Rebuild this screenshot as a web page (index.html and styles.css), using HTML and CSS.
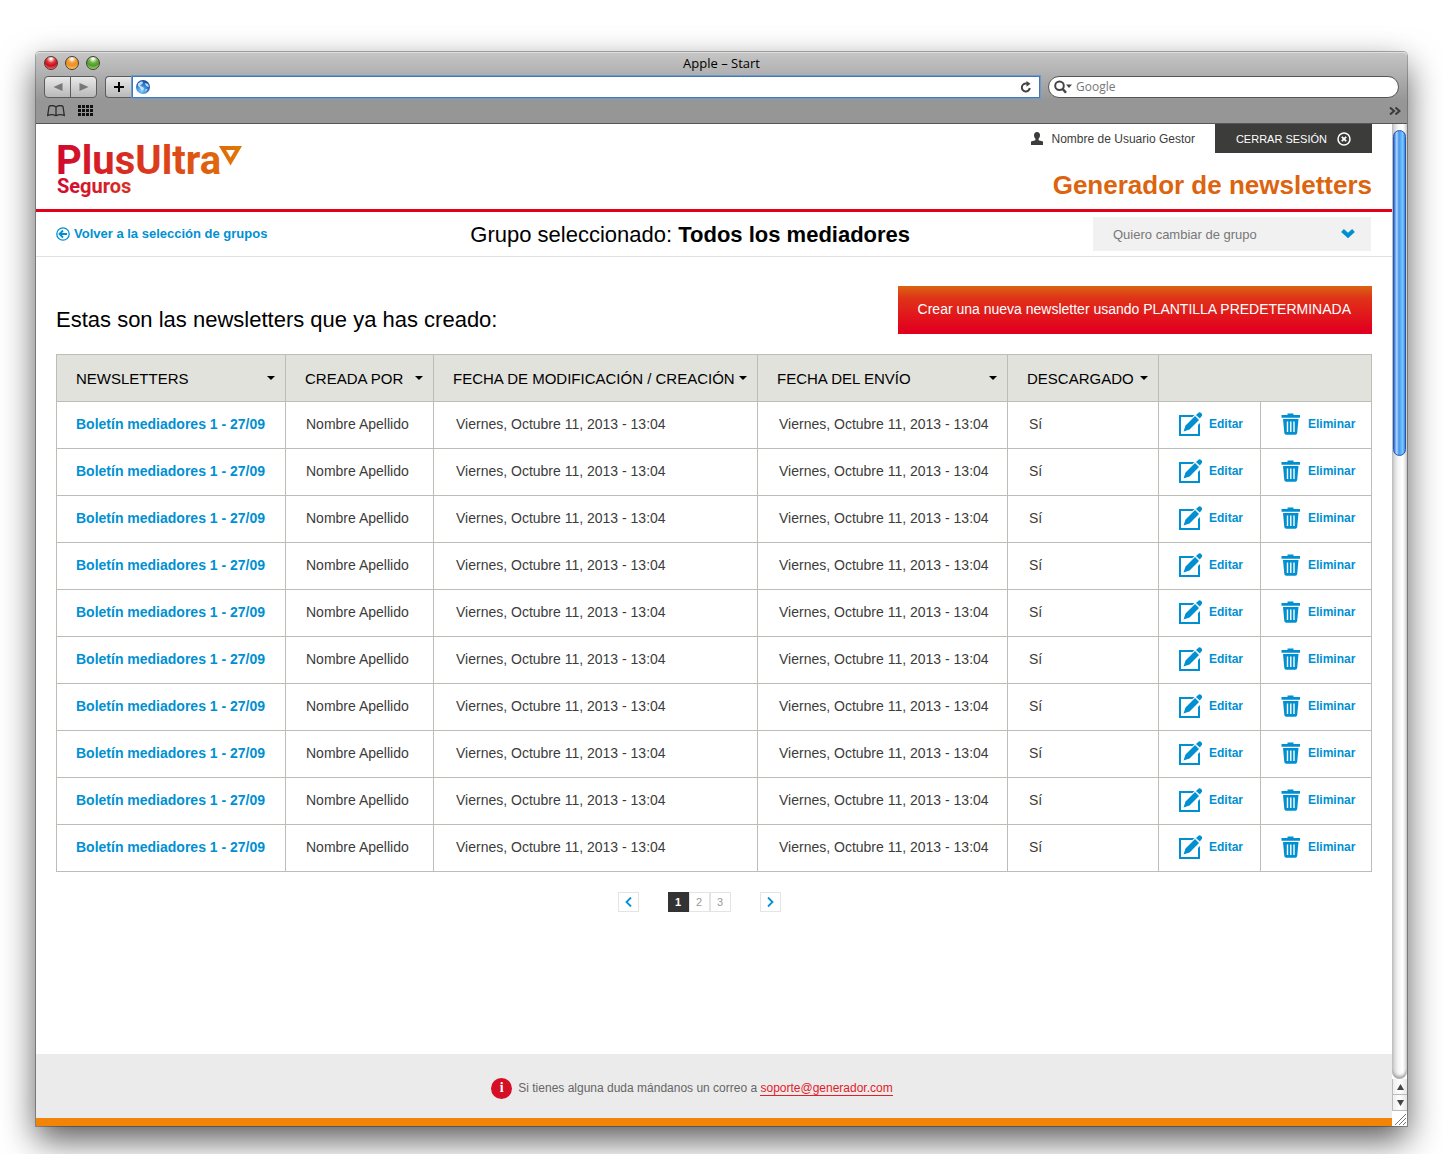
FILE: index.html
```html
<!DOCTYPE html>
<html lang="es">
<head>
<meta charset="utf-8">
<title>Generador de newsletters</title>
<link rel="stylesheet" href="styles.css">
</head>
<body>
<svg class="sprites" aria-hidden="true">
  <symbol id="edit" viewBox="0 0 24 24">
    <path d="M15.500 3H0v21h21V11l-2 2v9H2V5h11.500z"/>
    <path d="M4.500 19.500l2-6L16 4l4 4-9.500 9.500zM17 3l2.200-2.100q1.400-1.200 3 .2 1.600 1.800.4 3.100L20.800 6.500z"/>
  </symbol>
  <symbol id="trash" viewBox="0 0 20 22">
    <path d="M6.500 2V.5h6V2H19v2.800H.5V2zM2 6h15.500l-1.300 14q-.2 1.800-2 1.800H5.300q-1.800 0-2-1.800z"/>
    <path d="M6.500 8.500v10.500M9.800 8.500v10.500M13 8.500v10.500" stroke="#fff" stroke-width="1.400"/>
  </symbol>
</svg>
<div class="window">
  <div class="chrome">
    <div class="titlebar">
      <div class="lights"><span class="light red"></span><span class="light amber"></span><span class="light green"></span></div>
      <div class="window-title">Apple – Start</div>
    </div>
    <div class="toolbar">
      <div class="nav-buttons">
        <button type="button" aria-label="Atrás"><svg width="10" height="8"><path d="M9.500 0v8L.5 4z" fill="#777"/></svg></button>
        <button type="button" aria-label="Adelante"><svg width="10" height="8"><path d="M.5 0v8l9-4z" fill="#777"/></svg></button>
      </div>
      <div class="location">
        <button class="add" type="button" aria-label="Añadir"><svg width="12" height="12"><path d="M6 1v10M1 6h10" stroke="#000" stroke-width="2"/></svg></button>
        <div class="address">
          <svg width="14" height="14" viewBox="0 0 14 14"><defs><radialGradient id="globe" cx=".4" cy=".75" r=".8"><stop offset="0" stop-color="#8ad4fb"/><stop offset=".55" stop-color="#2d77cd"/><stop offset="1" stop-color="#123f91"/></radialGradient></defs><circle cx="7" cy="7" r="7" fill="url(#globe)"/><path d="M2 3.500l3-2 2 .3-.5 2L4 5.500l1.500 1L8 8 7 10.500 5 9.500 4 7.500 2 6zM9 3l3 1 1 3-2-.5L9.500 5zM9.500 9l2 .3-2 2.700z" fill="#d8f0ff" opacity=".85"/></svg>
          <input type="text" aria-label="Dirección">
          <svg width="12" height="12" viewBox="0 0 12 12"><path d="M9.800 7A4 4 0 1 1 6.500 2.500H8" fill="none" stroke="#444" stroke-width="2"/><path d="M6.500 0l4 2.800-4 3z" fill="#444"/></svg>
        </div>
      </div>
      <div class="search">
        <svg width="19" height="14" viewBox="0 0 19 14"><circle cx="5.500" cy="5.800" r="4.300" fill="none" stroke="#444" stroke-width="2"/><path d="M8.500 8.800l3.500 4" stroke="#444" stroke-width="2.500"/><path d="M12 4.500h6L15 8z" fill="#444"/></svg>
        <input type="text" placeholder="Google" aria-label="Buscar">
      </div>
    </div>
    <div class="bookmarks">
      <svg width="18" height="12" viewBox="0 0 18 12"><path d="M9 2Q5-.7 2 1.500L.7 10.500Q5 8.500 9 10.800 13 8.500 17.300 10.500L16 1.500Q13-.7 9 2zV11" fill="none" stroke="#2b2b2b" stroke-width="1.300"/></svg>
      <svg width="15" height="12" viewBox="0 0 15 12"><path d="M0 1.500h15M0 5.500h15M0 9.500h15" stroke="#111" stroke-width="3" stroke-dasharray="3 1"/></svg>
      <svg class="more" width="12" height="8" viewBox="0 0 12 8"><path d="M1 .5L5 4 1 7.500M6.500 .5l4 3.500-4 3.500" fill="none" stroke="#3a3a3a" stroke-width="2"/></svg>
    </div>
  </div>
  <div class="viewport">
    <div class="page">
      <header class="header">
        <a class="logo" href="#" aria-label="PlusUltra Seguros">
          <svg width="188" height="60" viewBox="0 0 188 60">
            <defs><linearGradient id="brand" gradientUnits="userSpaceOnUse" x1="0" y1="0" x2="186" y2="0"><stop offset="0" stop-color="#cf0a2c"/><stop offset=".55" stop-color="#dc3f1a"/><stop offset="1" stop-color="#e07a05"/></linearGradient></defs>
            <g fill="url(#brand)"><text class="logo-name" x="-1" y="33">PlusUltra</text><text class="logo-sub" x="0" y="52">Seguros</text></g>
            <path d="M165.500 7h16L173.500 20.500z" fill="none" stroke="url(#brand)" stroke-width="4"/>
          </svg>
        </a>
        <div class="header-side">
          <div class="account">
            <svg width="12" height="13" viewBox="0 0 12 13"><path d="M6 0c2 0 3 1.400 3 3.300 0 1.500-.6 2.700-1.400 3.500v1.400L12 9.500V13H0V9.500l4.400-1.300V6.800C3.600 6 3 4.800 3 3.300 3 1.400 4 0 6 0z" fill="#3c3c3b"/></svg>
            <span class="user">Nombre de Usuario Gestor</span>
            <button class="logout" type="button">CERRAR SESIÓN <svg width="14" height="14" viewBox="0 0 14 14"><circle cx="7" cy="7" r="6" fill="none" stroke="#fff" stroke-width="1.500"/><path d="M4.800 4.800l4.400 4.400M9.200 4.800L4.800 9.200" stroke="#fff" stroke-width="1.800"/></svg></button>
          </div>
          <h1>Generador de newsletters</h1>
        </div>
      </header>
      <div class="groupbar">
        <a class="back" href="#"><svg width="14" height="14" viewBox="0 0 14 14"><circle cx="7" cy="7" r="6.200" fill="none" stroke="#0090d2" stroke-width="1.300"/><path d="M11 7H4M7 3.500L3.500 7 7 10.500" fill="none" stroke="#0090d2" stroke-width="1.800"/></svg>Volver a la selección de grupos</a>
        <p class="group">Grupo seleccionado: <strong>Todos los mediadores</strong></p>
        <div class="group-select">
          <select aria-label="Cambiar de grupo"><option>Quiero cambiar de grupo</option></select>
          <svg width="14" height="10" viewBox="0 0 14 10"><path d="M1.500 1.500L7 6.500l5.500-5" fill="none" stroke="#0090d2" stroke-width="4"/></svg>
        </div>
      </div>
      <main class="main">
        <div class="intro">
          <h2>Estas son las newsletters que ya has creado:</h2>
          <button class="create" type="button">Crear una nueva newsletter usando PLANTILLA PREDETERMINADA</button>
        </div>
        <table>
          <colgroup><col class="c-name"><col class="c-author"><col class="c-modified"><col class="c-sent"><col class="c-down"><col class="c-edit"><col class="c-delete"></colgroup>
          <thead><tr>
            <th><button type="button">NEWSLETTERS<i></i></button></th>
            <th><button type="button">CREADA POR<i></i></button></th>
            <th><button type="button">FECHA DE MODIFICACIÓN / CREACIÓN<i></i></button></th>
            <th><button type="button">FECHA DEL ENVÍO<i></i></button></th>
            <th><button type="button">DESCARGADO<i></i></button></th>
            <th colspan="2"></th>
          </tr></thead>
          <tbody>
            <tr><td><a href="#">Boletín mediadores 1 - 27/09</a></td><td>Nombre Apellido</td><td>Viernes, Octubre 11, 2013 - 13:04</td><td>Viernes, Octubre 11, 2013 - 13:04</td><td>Sí</td><td><a class="action" href="#"><svg width="24" height="24"><use href="#edit"/></svg>Editar</a></td><td><a class="action" href="#"><svg width="20" height="22"><use href="#trash"/></svg>Eliminar</a></td></tr>
            <tr><td><a href="#">Boletín mediadores 1 - 27/09</a></td><td>Nombre Apellido</td><td>Viernes, Octubre 11, 2013 - 13:04</td><td>Viernes, Octubre 11, 2013 - 13:04</td><td>Sí</td><td><a class="action" href="#"><svg width="24" height="24"><use href="#edit"/></svg>Editar</a></td><td><a class="action" href="#"><svg width="20" height="22"><use href="#trash"/></svg>Eliminar</a></td></tr>
            <tr><td><a href="#">Boletín mediadores 1 - 27/09</a></td><td>Nombre Apellido</td><td>Viernes, Octubre 11, 2013 - 13:04</td><td>Viernes, Octubre 11, 2013 - 13:04</td><td>Sí</td><td><a class="action" href="#"><svg width="24" height="24"><use href="#edit"/></svg>Editar</a></td><td><a class="action" href="#"><svg width="20" height="22"><use href="#trash"/></svg>Eliminar</a></td></tr>
            <tr><td><a href="#">Boletín mediadores 1 - 27/09</a></td><td>Nombre Apellido</td><td>Viernes, Octubre 11, 2013 - 13:04</td><td>Viernes, Octubre 11, 2013 - 13:04</td><td>Sí</td><td><a class="action" href="#"><svg width="24" height="24"><use href="#edit"/></svg>Editar</a></td><td><a class="action" href="#"><svg width="20" height="22"><use href="#trash"/></svg>Eliminar</a></td></tr>
            <tr><td><a href="#">Boletín mediadores 1 - 27/09</a></td><td>Nombre Apellido</td><td>Viernes, Octubre 11, 2013 - 13:04</td><td>Viernes, Octubre 11, 2013 - 13:04</td><td>Sí</td><td><a class="action" href="#"><svg width="24" height="24"><use href="#edit"/></svg>Editar</a></td><td><a class="action" href="#"><svg width="20" height="22"><use href="#trash"/></svg>Eliminar</a></td></tr>
            <tr><td><a href="#">Boletín mediadores 1 - 27/09</a></td><td>Nombre Apellido</td><td>Viernes, Octubre 11, 2013 - 13:04</td><td>Viernes, Octubre 11, 2013 - 13:04</td><td>Sí</td><td><a class="action" href="#"><svg width="24" height="24"><use href="#edit"/></svg>Editar</a></td><td><a class="action" href="#"><svg width="20" height="22"><use href="#trash"/></svg>Eliminar</a></td></tr>
            <tr><td><a href="#">Boletín mediadores 1 - 27/09</a></td><td>Nombre Apellido</td><td>Viernes, Octubre 11, 2013 - 13:04</td><td>Viernes, Octubre 11, 2013 - 13:04</td><td>Sí</td><td><a class="action" href="#"><svg width="24" height="24"><use href="#edit"/></svg>Editar</a></td><td><a class="action" href="#"><svg width="20" height="22"><use href="#trash"/></svg>Eliminar</a></td></tr>
            <tr><td><a href="#">Boletín mediadores 1 - 27/09</a></td><td>Nombre Apellido</td><td>Viernes, Octubre 11, 2013 - 13:04</td><td>Viernes, Octubre 11, 2013 - 13:04</td><td>Sí</td><td><a class="action" href="#"><svg width="24" height="24"><use href="#edit"/></svg>Editar</a></td><td><a class="action" href="#"><svg width="20" height="22"><use href="#trash"/></svg>Eliminar</a></td></tr>
            <tr><td><a href="#">Boletín mediadores 1 - 27/09</a></td><td>Nombre Apellido</td><td>Viernes, Octubre 11, 2013 - 13:04</td><td>Viernes, Octubre 11, 2013 - 13:04</td><td>Sí</td><td><a class="action" href="#"><svg width="24" height="24"><use href="#edit"/></svg>Editar</a></td><td><a class="action" href="#"><svg width="20" height="22"><use href="#trash"/></svg>Eliminar</a></td></tr>
            <tr><td><a href="#">Boletín mediadores 1 - 27/09</a></td><td>Nombre Apellido</td><td>Viernes, Octubre 11, 2013 - 13:04</td><td>Viernes, Octubre 11, 2013 - 13:04</td><td>Sí</td><td><a class="action" href="#"><svg width="24" height="24"><use href="#edit"/></svg>Editar</a></td><td><a class="action" href="#"><svg width="20" height="22"><use href="#trash"/></svg>Eliminar</a></td></tr>
          </tbody>
        </table>
        <nav class="pagination" aria-label="Páginas">
          <a href="#" aria-label="Anterior"><svg width="7" height="10"><path d="M6 .5L1.500 5 6 9.500" fill="none" stroke="#0090d2" stroke-width="1.800"/></svg></a>
          <div class="pages"><a class="current" href="#" aria-current="page">1</a><a href="#">2</a><a href="#">3</a></div>
          <a href="#" aria-label="Siguiente"><svg width="7" height="10"><path d="M1 .5L5.500 5 1 9.500" fill="none" stroke="#0090d2" stroke-width="1.800"/></svg></a>
        </nav>
      </main>
      <footer class="footer">
        <span class="info">i</span>
        <p>Si tienes alguna duda mándanos un correo a <a href="mailto:soporte@generador.com">soporte@generador.com</a></p>
      </footer>
    </div>
    <div class="scrollbar" aria-hidden="true">
      <div class="track"><div class="thumb"></div></div>
      <div class="arrow"><svg width="7" height="6"><path d="M0 6h7L3.500 0z" fill="#444"/></svg></div>
      <div class="arrow"><svg width="7" height="6"><path d="M0 0h7L3.500 6z" fill="#444"/></svg></div>
      <svg class="resize" width="15" height="15"><path d="M3 14L14 3M7 14l7-7M11 14l3-3" stroke="#777"/></svg>
    </div>
  </div>
</div>
</body>
</html>
```
FILE: styles.css
```css
* { box-sizing: border-box; }
body {
  display: flex;
  flex-direction: column;
  min-height: 100vh;
  margin: 0;
  padding: 52px 36px 28px;
  background: #fff;
  color: #3c3c3b;
  font: 14px/20px "Liberation Sans", Arial, sans-serif;
}
svg { display: block; flex: none; }
button, input, select { margin: 0; padding: 0; border: 0; background: none; color: inherit; font: inherit; outline: 0; }
h1, h2, p { margin: 0; }
a { color: #0090d2; text-decoration: none; }
.sprites { position: absolute; width: 0; height: 0; }

/* Browser window */
.window {
  display: flex;
  flex: 1;
  flex-direction: column;
  border-radius: 4px 4px 0 0;
  box-shadow: 0 0 0 1px rgba(0, 0, 0, .3), 0 14px 34px rgba(0, 0, 0, .65);
}
.chrome {
  height: 72px;
  border-top: 1px solid #dedede;
  border-bottom: 1px solid #555;
  border-radius: 4px 4px 0 0;
  background: linear-gradient(#c5c5c5, #969696 48px);
}
.titlebar { display: grid; grid-template-columns: 1fr auto 1fr; align-items: center; height: 20px; padding: 0 8px; }
.window-title { color: #000; font: 13px/20px "Open Sans", sans-serif; }
.lights { display: flex; gap: 7px; }
.light { width: 14px; height: 14px; border: 1px solid #4d3a33; border-radius: 50%; }
.red { background: radial-gradient(circle at 50% 15%, #fff 5%, #e2373c 35%, #c80f1b 60%, #ff9d9d); }
.amber { background: radial-gradient(circle at 50% 15%, #fff 5%, #f19a35 35%, #ee9022 60%, #fff08c); }
.green { background: radial-gradient(circle at 50% 15%, #fff 5%, #6db443 35%, #4c9c2b 60%, #c6f58d); }
.toolbar { display: flex; gap: 8px; align-items: center; height: 28px; padding: 0 8px; }
.nav-buttons { display: flex; width: 53px; height: 22px; border: 1px solid #5c5c5c; border-radius: 4px; background: linear-gradient(#e9e9e9, #b9b9b9); }
.nav-buttons button { display: flex; flex: 1; align-items: center; justify-content: center; }
.nav-buttons button + button { border-left: 1px solid #5c5c5c; }
.location { display: flex; flex: 1; }
.add { display: flex; align-items: center; justify-content: center; width: 27px; height: 22px; border: 1px solid #5c5c5c; border-right: 0; border-radius: 4px 0 0 4px; background: linear-gradient(#e9e9e9, #b9b9b9); }
.address { display: flex; flex: 1; align-items: center; height: 22px; padding: 0 7px 0 3px; border: 1px solid #4577b0; background: #fff; box-shadow: 0 0 0 1px #6d9bd0; }
.address input { flex: 1; min-width: 0; }
.search { display: flex; gap: 3px; align-items: center; width: 351px; height: 22px; padding: 0 8px 0 5px; border: 1px solid #555; border-radius: 11px; background: #fff; }
.search input { flex: 1; min-width: 0; color: #666; font: 12px/18px "Open Sans", sans-serif; }
.search input::placeholder { color: #777; opacity: 1; }
.bookmarks { display: flex; gap: 13px; align-items: center; height: 20px; padding: 0 6px 0 11px; }
.more { margin-left: auto; }
.viewport { display: flex; flex: 1; background: #fff; }
.page { display: flex; flex: 1; flex-direction: column; min-width: 0; }

/* Site header */
.header { display: flex; justify-content: space-between; padding: 0 20px; border-bottom: 3px solid #e2001a; }
.logo { padding: 17px 0 8px 1px; }
.logo svg { overflow: visible; }
.logo-name { font: bold 40px Roboto, sans-serif; }
.logo-sub { font: bold 20px Roboto, sans-serif; }
.header-side { display: flex; flex-direction: column; gap: 16px; align-items: flex-end; }
.account { display: flex; align-items: center; font-size: 12px; }
.user { padding: 0 20px 0 9px; }
.logout { display: flex; gap: 10px; align-items: center; height: 29px; padding: 0 21px; background: #3c3c3b; color: #fff; font-size: 11px; }
h1 { color: #dd640f; font-size: 26px; line-height: 32px; }

.groupbar { display: flex; align-items: center; height: 45px; padding: 0 21px 0 20px; border-bottom: 1px solid #e1e1e1; }
.back { display: flex; gap: 4px; align-items: center; font-size: 13px; font-weight: bold; }
.group { flex: 1; padding: 2px 0 0 20px; color: #000; font-size: 22px; line-height: 28px; text-align: center; }
.group-select { display: flex; align-items: center; width: 278px; height: 34px; padding-right: 16px; background: #f1f1f1; }
.group-select select { flex: 1; height: 34px; padding: 2px 0 0 20px; color: #777; font-size: 13px; appearance: none; }

/* Newsletter list */
.main { flex: 1; padding: 29px 20px 40px; }
.intro { display: flex; justify-content: space-between; align-items: flex-end; margin-bottom: 20px; }
h2 { color: #000; font-size: 22px; font-weight: normal; line-height: 28px; }
.create { height: 48px; padding: 0 21px 2px 20px; background: linear-gradient(#d96510, #df3318 12px, #e2001f 44px); color: #fff; }
table { width: 100%; border: solid #bdbdb8; border-width: 1px 0 0 1px; border-spacing: 0; table-layout: fixed; }
.c-name { width: 229px; }
.c-author { width: 148px; }
.c-modified { width: 324px; }
.c-sent { width: 250px; }
.c-down { width: 151px; }
.c-edit { width: 102px; }
.c-delete { width: 111px; }
th, td { height: 47px; padding: 0 0 2px 20px; border: solid #bdbdb8; border-width: 0 1px 1px 0; text-align: left; white-space: nowrap; }
th { padding: 1px 10px 0 19px; background: #e1e2dc; font-weight: normal; }
th button { display: flex; align-items: center; justify-content: space-between; width: 100%; color: #000; font-size: 15px; }
th i { margin-bottom: 2px; border: solid transparent; border-width: 4px 4px 0; border-top-color: #000; }
td:first-child { padding-left: 19px; font-weight: bold; }
td:nth-child(3) { padding-left: 22px; }
td:nth-child(4), td:nth-child(5) { padding-left: 21px; }
.action { display: flex; gap: 6px; align-items: center; font-size: 12px; font-weight: bold; }
td:last-child .action { gap: 7px; }
.action svg { fill: #0090d2; }

.pagination { display: flex; gap: 29px; justify-content: center; margin-top: 20px; padding-right: 30px; }
.pagination a { display: flex; align-items: center; justify-content: center; width: 21px; height: 20px; border: 1px solid #e4e4e4; color: #999; font-size: 11px; }
.pages { display: flex; }
.pagination .current { border-color: #333; background: #333; color: #fff; font-weight: bold; }

.footer { display: flex; gap: 6px; align-items: center; justify-content: center; height: 72px; padding: 4px 44px 0 0; border-bottom: 8px solid #f28507; background: #ebebeb; color: #666; font-size: 12px; }
.info { width: 21px; height: 21px; border-radius: 50%; background: #d50f26; color: #fff; font: bold 14px/20px "Liberation Serif", serif; text-align: center; }
.footer a { border-bottom: 1px solid #e2202a; color: #e2202a; }

/* Scrollbar */
.scrollbar { display: flex; flex-direction: column; width: 15px; background: #fff; }
.track { flex: 1; padding: 6px 1px 0; border-radius: 0 0 8px 8px; background: linear-gradient(90deg, #c8c8c8, #f4f4f4 40%, #fff 70%, #ddd); box-shadow: inset 0 -3px 3px #aaa; }
.thumb { height: 326px; border: 1px solid #2555b5; border-radius: 7px; background: linear-gradient(90deg, #2c6fda, #b4d8fb 25%, #4296f0 45%, #7ccbff 80%, #3d7dda); }
.arrow { display: flex; align-items: center; justify-content: center; height: 16px; border: solid #bbb; border-width: 0 0 1px 1px; background: linear-gradient(90deg, #eee, #fff, #e4e4e4); }
```
